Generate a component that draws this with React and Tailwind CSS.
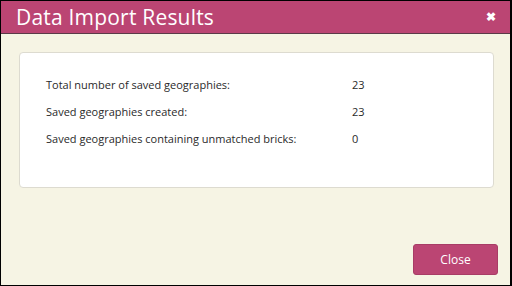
import React from "react";

const rows = [
  { label: "Total number of saved geographies:", value: "23" },
  { label: "Saved geographies created:", value: "23" },
  { label: "Saved geographies containing unmatched bricks:", value: "0" },
];

const App = () => {
  return (
    <div className="w-[512px] h-[286px] border border-black border-r-2 bg-[#f6f4e4] flex flex-col font-['Open_Sans',sans-serif]">
      {/* header */}
      <div className="h-[33px] shrink-0 bg-[#bb4573] border-b border-[#5a3a48] flex items-center justify-between pl-[15px] pr-[14px]">
        <h1 className="text-white text-[21px] leading-none tracking-[0.2px]">Data Import Results</h1>
        <span className="text-white text-[12px] font-bold leading-none">✖</span>
      </div>

      {/* results */}
      <div className="mt-[18px] ml-[18px] mr-[16px] h-[136px] bg-white border border-[#dddbd0] rounded-[4px] pt-[25px] pl-[26px] flex flex-col gap-[13px]">
        {rows.map((row) => (
          <div key={row.label} className="flex text-[11px] leading-[14px] text-[#2a2a2a]">
            <span className="w-[306px]">{row.label}</span>
            <span>{row.value}</span>
          </div>
        ))}
      </div>

      <div className="flex-1 flex items-end justify-end pr-[12px] pb-[10px]">
        <button className="w-[85px] h-[31px] rounded-[3px] bg-[#bb4573] border border-[#a83c66] text-white text-[12px]">
          Close
        </button>
      </div>
    </div>
  );
};

export default App;
